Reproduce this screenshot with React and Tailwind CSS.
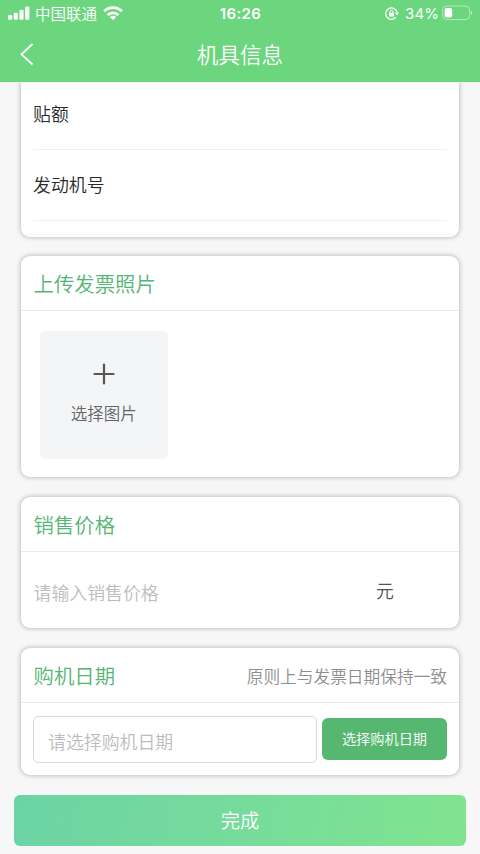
import React from "react";

const cardShadow = "shadow-[0_0_4px_1px_rgba(0,0,0,0.22)]";

function StatusBar() {
  return (
    <div className="grid h-[26px] grid-cols-3 items-center pl-2 pr-[7px] leading-none">
      <div className="flex items-center">
        <svg width="22" height="14" viewBox="0 0 22 14" fill="#fff">
          <rect x="0" y="9" width="4.2" height="4.8" rx="1.2" />
          <rect x="5.7" y="6.8" width="4.2" height="7" rx="1.2" />
          <rect x="11.4" y="3.8" width="4.2" height="10" rx="1.2" />
          <rect x="17.2" y="0.4" width="4.2" height="13.4" rx="1.2" />
        </svg>
        <span className="ml-[5px] whitespace-nowrap pt-0.5 text-[15.5px]">中国联通</span>
        <svg className="ml-1.5" width="20" height="14" viewBox="0 0 20 14" fill="none" stroke="#fff" strokeWidth="2.9">
          <path d="M1.2 5.2a12.6 12.6 0 0 1 17.6 0" />
          <path d="M4.6 9a7.8 7.8 0 0 1 10.8 0" />
          <path d="M10 14 6.8 11a4.5 4.5 0 0 1 6.4 0Z" fill="#fff" stroke="none" />
        </svg>
      </div>
      <span className="text-center font-[Inter] text-[15px] font-semibold tracking-[0.4px]">16:26</span>
      <div className="flex items-center justify-end">
        <svg width="14" height="13" viewBox="0 0 14 13" fill="none" stroke="#fff" strokeWidth="1.3">
          <path d="M10.9 10.2A5.7 5.7 0 1 1 11.9 5" />
          <path d="M9.9 5.6h4.1L12 8.4Z" fill="#fff" stroke="none" />
          <rect x="4" y="5.8" width="5" height="3.8" rx="0.5" fill="#fff" stroke="none" />
          <path d="M5 6V4.7a1.5 1.5 0 0 1 3 0V6" strokeWidth="1" />
        </svg>
        <span className="ml-[6px] font-[Inter] text-[15px] font-normal tracking-[0.1px]">34%</span>
        <svg className="ml-[3px]" width="31" height="16" viewBox="0 0 31 16" fill="none">
          <rect x="0.6" y="1" width="27" height="13.6" rx="4" stroke="#fff" strokeOpacity="0.5" />
          <rect x="2.6" y="3" width="7.6" height="9.6" rx="2" fill="#fff" />
          <path d="M29 5.8c1.7.7 1.7 3.5 0 4.2Z" fill="#fff" fillOpacity="0.6" />
        </svg>
      </div>
    </div>
  );
}

function Card({ title, note, className, children }) {
  return (
    <section className={`mx-[21px] rounded-[9px] bg-white ${cardShadow} ${className}`}>
      <header className="flex h-[55px] items-center justify-between border-b border-[#ebebeb] pl-[12.5px] pr-[12px]">
        <h2 className="text-[20.4px] text-[#55b574]">{title}</h2>
        {note && <span className="pt-[3px] text-[16.7px] text-[#8e8e8e]">{note}</span>}
      </header>
      {children}
    </section>
  );
}

export default function App() {
  return (
    <div className="flex h-[854px] w-[480px] flex-col overflow-hidden bg-[#f7f7f7] font-['Noto_Sans_CJK_SC',sans-serif] font-[350]">
      <div className="z-10 h-[82px] shrink-0 bg-[#6bd67d] text-white">
        <StatusBar />
        <div className="grid h-[56px] grid-cols-[60px_1fr_60px] items-center">
          <svg className="ml-[19px]" width="15" height="24" viewBox="0 0 15 24" fill="none" stroke="#fff" strokeWidth="1.8">
            <path d="M13.5 2 2.5 12.3l11 10.2" />
          </svg>
          <h1 className="pb-px text-center text-[21.6px] leading-none font-[350]">机具信息</h1>
        </div>
      </div>

      <section className={`mx-[21px] h-[155px] shrink-0 rounded-b-[9px] bg-white px-[12px] text-[17.9px] text-[#2a2a2a] ${cardShadow}`}>
        <div className="flex h-[68px] items-center border-b border-[#f0f0f0] pb-1">贴额</div>
        <div className="flex h-[71px] items-center border-b border-[#f0f0f0] pb-0.5">发动机号</div>
        <div className="-mx-[8px] h-[14px] border-b border-[#f6f6f6]" />
      </section>

      <Card title="上传发票照片" className="mt-[19px] h-[221px] shrink-0">
        <div className="ml-[19px] mt-[19.5px] flex h-32 w-[127.5px] flex-col items-center rounded-[5px] bg-[#f3f5f7] pt-[32.5px] text-[#666]">
          <svg width="22" height="22" viewBox="0 0 22 22" stroke="#555" strokeWidth="2.2" strokeLinecap="round">
            <path d="M11 1.5v19M1.5 11h19" />
          </svg>
          <span className="mt-[16px] text-[16.5px] leading-6">选择图片</span>
        </div>
      </Card>

      <Card title="销售价格" className="mt-[20px] h-[131px] shrink-0">
        <div className="flex h-[76px] items-center justify-between pl-[12.5px] pr-[65px] text-[17.9px]">
          <span className="pt-1 text-[#bcbcc0]">请输入销售价格</span>
          <span className="text-[#555]">元</span>
        </div>
      </Card>

      <Card title="购机日期" note="原则上与发票日期保持一致" className="mt-[20px] h-[127px] shrink-0">
        <div className="flex items-center pl-3 pr-[12px] pt-[13px]">
          <div className="flex h-[47px] w-[284px] shrink-0 items-center rounded-[5px] border border-[#d9d9d9] pl-[14px] pt-1 text-[17.9px] text-[#bcbcc0]">
            请选择购机日期
          </div>
          <button className="mb-px ml-[5px] h-[42px] w-[125px] rounded-[6px] bg-[#56b870] text-[14.2px] text-white">选择购机日期</button>
        </div>
      </Card>

      <button className="mx-[14px] mt-[20px] h-[51px] shrink-0 rounded-[6px] bg-linear-100 from-[#6cd3a5] to-[#80e48f] text-[19.3px] text-white">
        完成
      </button>
    </div>
  );
}
